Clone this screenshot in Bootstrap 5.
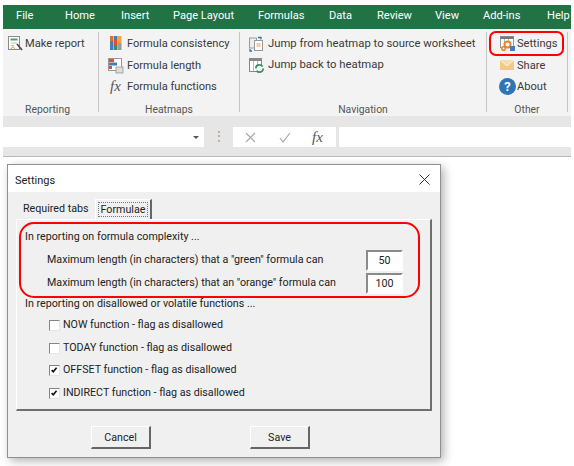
<!DOCTYPE html>
<html lang="en"><head><meta charset="utf-8"><title>Settings</title>
<link href="https://cdn.jsdelivr.net/npm/bootstrap@5.3.0/dist/css/bootstrap.min.css" rel="stylesheet">
<style>
html,body{background:#fff;height:466px;overflow:hidden}
body{font-family:Roboto,"Noto Sans",sans-serif;color:#3a3a3a;font-size:11.1px;line-height:1.2;padding-top:5px}
.xl-frame{margin-left:3px;width:568px}
.xl-menu{background:#217346;height:24px;padding:0 0 3px 13px;display:grid;grid-template-columns:49px 56px 52px 85px 71px 48px 58px 48px 64px auto;align-items:center;color:#fff;font-size:11.1px}
.xl-ribbon{background:#f3f3f3;height:87px;padding-top:3px}
.xl-group{height:80px;border-right:1px solid #c6c6c6;padding-top:1px}
.xl-g1{width:96px;--pad:4px;--gap:1px;padding-right:6px}.xl-g2{width:141px;--pad:8px;--gap:3px}.xl-g3{width:247px;--pad:8px;--gap:3px;font-size:11.3px}.xl-g4{width:81px;--pad:12px;--gap:1px}
.xl-row{height:21.5px;gap:var(--gap);white-space:nowrap;padding-left:var(--pad)}
.xl-ico{width:17px;height:17px;flex:none}
.xl-label{margin-top:auto;margin-bottom:-4px;text-align:center;font-size:10.4px;color:#555}
.xl-bar{background:#e6e6e6;height:41px;border-bottom:1px solid #b9b9b9;padding-top:11px}
.xl-name{background:#fff;width:201px;height:20px;position:relative}
.xl-name::after{content:"";position:absolute;right:5px;top:9px;border:3px solid transparent;border-top-color:#555;border-bottom:0}
.xl-dots{width:29px;color:#999;text-align:center;font-size:12px;line-height:19px}
.xl-fxbox{background:#fff;width:103px;height:20px;color:#999;padding-left:11px;gap:21px}
.xl-fx{font:italic 15px/17px "Liberation Serif",serif;color:#555;text-align:center}
.xl-input{background:#fff;flex:1;height:20px;margin-left:3px}
.dlg{margin:7px 0 0 7px;width:434px;height:294px;background:#f0f0f0;border:1px solid #8f8f8f;box-shadow:3px 3px 9px rgba(0,0,0,.3);font-family:Roboto,sans-serif;font-size:10.7px;color:#222}
.dlg-title{background:#fff;height:27px;padding:2px 10px 0 7px;font-size:11px}
.dlg-title span{padding-top:3px}
.dlg-tabs{height:27px;padding:7px 0 0 7px;align-items:flex-end}
.dlg-tab{padding:0 0 3px 8px;width:80px;height:18px;line-height:16px;white-space:nowrap}
.dlg-tab-on{height:20px;width:57px;margin-left:0;padding:2px;background:#f0f0f0;border-top:1px solid #fff;border-left:1px solid #fff;border-right:2px solid #666}
.dlg-focus{display:block;border:1px dotted #777;line-height:13px;text-align:center;height:15px}
.dlg-panel{margin-left:8px;width:416px;height:192px;border-top:1px solid #fff;border-left:1px solid #fff;border-right:2px solid #6f6f6f;border-bottom:2px solid #6f6f6f;padding:9px 0 0 8px}
.dlg-head{height:16px;line-height:16px}
.dlg-field{height:23px;padding-left:22px;width:378px}
.dlg-field input{width:37px;height:21px;border:2px solid #fff;border-top-color:#8a8a8a;border-left-color:#8a8a8a;border-radius:0;padding:0;text-align:center;font-size:10.7px;color:#222;background:#fff;box-shadow:none}
.dlg-checks{margin-top:2px;padding-left:24px}
.dlg-check{height:22.7px;margin:0;padding:0;min-height:0;gap:3px}
.dlg-check .form-check-input{float:none;margin:0;width:11px;height:11px;flex:none;border-radius:0;border:1px solid #e6e6e6;border-top-color:#858585;border-left-color:#858585;background-color:#fff}
.dlg-check .form-check-input:checked{background-color:#fff;border-color:#858585 #e6e6e6 #e6e6e6 #858585;background-image:url("data:image/svg+xml,%3Csvg xmlns='http://www.w3.org/2000/svg' viewBox='0 0 11 11'%3E%3Cpath d='M2 5l2 2 4-5' fill='none' stroke='%23111' stroke-width='2'/%3E%3C/svg%3E");background-size:100%}
.dlg-foot{padding:15px 0 0 83px;gap:99px}
.dlg-btn{width:60px;height:23px;padding:0;border-radius:0;background:#f0f0f0;color:#222;font-size:10.7px;line-height:19px;border:1px solid #fff;border-right:2px solid #666;border-bottom:2px solid #666}
.dlg-btn:hover{background:#f0f0f0;color:#222}
.ring{position:absolute;border:2px solid #f00;pointer-events:none}
.ring-a{left:489px;top:31px;width:75px;height:25px;border-radius:7px}
.ring-b{left:19px;top:222px;width:401px;height:76px;border-radius:15px}
</style></head><body>
<div class="xl-frame">
 <div class="xl-menu"><span>File</span><span>Home</span><span>Insert</span><span>Page Layout</span><span>Formulas</span><span>Data</span><span>Review</span><span>View</span><span>Add-ins</span><span>Help</span></div>
 <div class="xl-ribbon d-flex">
  <div class="xl-group xl-g1 d-flex flex-column">
   <div class="xl-row d-flex align-items-center"><svg class="xl-ico" viewBox="0 0 17 17"><rect x="1.500" y="1.500" width="11" height="13" fill="#fff" stroke="#8a8a8a"/><rect x="3.500" y="3.500" width="7" height="2" fill="#4f9b72"/><path d="M4 8h6M4 10.500h3" stroke="#bbb"/><path d="M4 14l2-2.500 2 2.500" fill="none" stroke="#e8963c"/><path d="M10 9l5 6" stroke="#444" stroke-width="1.600"/></svg><span>Make report</span></div>
   <div class="xl-label">Reporting</div>
  </div>
  <div class="xl-group xl-g2 d-flex flex-column">
   <div class="xl-row d-flex align-items-center"><svg class="xl-ico" viewBox="0 0 17 17"><rect x="3" y="1" width="3.500" height="5" fill="#e0702c"/><rect x="7" y="1" width="3.500" height="4" fill="#3f7fbf"/><rect x="11" y="1" width="3.500" height="7" fill="#f0a93a"/><rect x="3" y="6" width="3.500" height="9" fill="#3f7fbf"/><rect x="7" y="5" width="3.500" height="5" fill="#d9542b"/><rect x="7" y="10" width="3.500" height="5" fill="#35906a"/><rect x="11" y="8" width="3.500" height="7" fill="#9a9a9a"/></svg><span>Formula consistency</span></div>
   <div class="xl-row d-flex align-items-center"><svg class="xl-ico" viewBox="0 0 17 17"><rect x="1.500" y="1.500" width="13" height="12" fill="#fff" stroke="#999"/><rect x="2" y="2" width="5" height="3" fill="#d9542b"/><rect x="2" y="5.500" width="8" height="3" fill="#3f7fbf"/><rect x="2" y="9" width="3" height="3" fill="#d9542b"/><rect x="9" y="10" width="7" height="6" fill="#ddd" stroke="#888" stroke-width=".7"/></svg><span>Formula length</span></div>
   <div class="xl-row d-flex align-items-center"><span class="xl-ico xl-fx">fx</span><span>Formula functions</span></div>
   <div class="xl-label">Heatmaps</div>
  </div>
  <div class="xl-group xl-g3 d-flex flex-column">
   <div class="xl-row d-flex align-items-center"><svg class="xl-ico" viewBox="0 0 17 17"><rect x="1.500" y="3" width="7" height="10" fill="#eee" stroke="#999"/><rect x="6.500" y="5.500" width="8" height="10" fill="#fff" stroke="#999"/><path d="M8.500 9h4M8.500 11h4" stroke="#e8963c"/><path d="M10 2.500h3v2M4 16h-2v-2" fill="none" stroke="#2f75b5" stroke-width="1.300"/></svg><span>Jump from heatmap to source worksheet</span></div>
   <div class="xl-row d-flex align-items-center"><svg class="xl-ico" viewBox="0 0 17 17"><rect x="1.500" y="1.500" width="12" height="13" fill="#fff" stroke="#888"/><rect x="1.500" y="1.500" width="12" height="2.500" fill="#888"/><path d="M5.500 4v10M9.500 4v4" stroke="#bbb"/><circle cx="11.500" cy="11.500" r="3.700" fill="#f3f3f3" stroke="#35906a" stroke-width="1.800" stroke-dasharray="9 2.500"/></svg><span>Jump back to heatmap</span></div>
   <div class="xl-label">Navigation</div>
  </div>
  <div class="xl-group xl-g4 d-flex flex-column">
   <div class="xl-row d-flex align-items-center"><svg class="xl-ico" viewBox="0 0 17 17"><rect x="1.500" y="1.500" width="13" height="11" fill="#fff" stroke="#999"/><rect x="1.500" y="1.500" width="13" height="2.500" fill="#777"/><path d="M5.500 4v4M9.500 4v4" stroke="#bbb"/><circle cx="8.500" cy="9.500" r="3" fill="#fff" stroke="#e8832c" stroke-width="2"/><circle cx="4.500" cy="13.500" r="1.800" fill="#fff" stroke="#e8832c" stroke-width="1.500"/><rect x="11" y="11" width="5" height="5" fill="#3f7fbf"/></svg><span>Settings</span></div>
   <div class="xl-row d-flex align-items-center"><svg class="xl-ico" viewBox="0 0 17 17"><rect x="1" y="3" width="14" height="10" fill="#f2c987"/><path d="M1 3l7 6 7-6" fill="#f7dcae" stroke="#fff" stroke-width=".7"/></svg><span>Share</span></div>
   <div class="xl-row d-flex align-items-center"><span class="xl-ico rounded-circle text-center text-white fw-bold" style="background:#2f75b5;font-size:13px;line-height:17px">?</span><span>About</span></div>
   <div class="xl-label">Other</div>
  </div>
 </div>
 <div class="xl-bar d-flex">
  <div class="xl-name"></div><div class="xl-dots">⋮</div>
  <div class="xl-fxbox d-flex align-items-center"><svg width="13" height="13" viewBox="0 0 13 13"><path d="M2 2l9 9M11 2l-9 9" stroke="#aaa" stroke-width="1.200"/></svg><svg width="13" height="13" viewBox="0 0 13 13"><path d="M2 7l3 4 7-9" fill="none" stroke="#aaa" stroke-width="1.200"/></svg><span class="xl-fx">fx</span></div>
  <div class="xl-input"></div>
 </div>
</div>
<div class="dlg">
 <div class="dlg-title d-flex align-items-center justify-content-between"><span>Settings</span><svg width="11" height="11" viewBox="0 0 11 11"><path d="M.5.500l10 10M10.500.500l-10 10" stroke="#333"/></svg></div>
 <div class="dlg-tabs d-flex">
  <div class="dlg-tab">Required tabs</div>
  <div class="dlg-tab dlg-tab-on"><span class="dlg-focus">Formulae</span></div>
 </div>
 <div class="dlg-panel">
  <div class="dlg-head">In reporting on formula complexity ...</div>
  <div class="dlg-field d-flex align-items-center justify-content-between mt-1"><span>Maximum length (in characters) that a "green" formula can</span><input class="form-control" value="50"></div>
  <div class="dlg-field d-flex align-items-center justify-content-between"><span>Maximum length (in characters) that an "orange" formula can</span><input class="form-control" value="100"></div>
  <div class="dlg-head" style="margin-top:1px">In reporting on disallowed or volatile functions ...</div>
  <div class="dlg-checks">
   <label class="form-check dlg-check d-flex align-items-center"><input class="form-check-input" type="checkbox"><span>NOW function - flag as disallowed</span></label>
   <label class="form-check dlg-check d-flex align-items-center"><input class="form-check-input" type="checkbox"><span>TODAY function - flag as disallowed</span></label>
   <label class="form-check dlg-check d-flex align-items-center"><input class="form-check-input" type="checkbox" checked><span>OFFSET function - flag as disallowed</span></label>
   <label class="form-check dlg-check d-flex align-items-center"><input class="form-check-input" type="checkbox" checked><span>INDIRECT function - flag as disallowed</span></label>
  </div>
 </div>
 <div class="dlg-foot d-flex"><button class="btn dlg-btn">Cancel</button><button class="btn dlg-btn">Save</button></div>
</div>
<div class="ring ring-a"></div><div class="ring ring-b"></div>
<script src="https://cdn.jsdelivr.net/npm/bootstrap@5.3.0/dist/js/bootstrap.bundle.min.js"></script>
</body></html>
